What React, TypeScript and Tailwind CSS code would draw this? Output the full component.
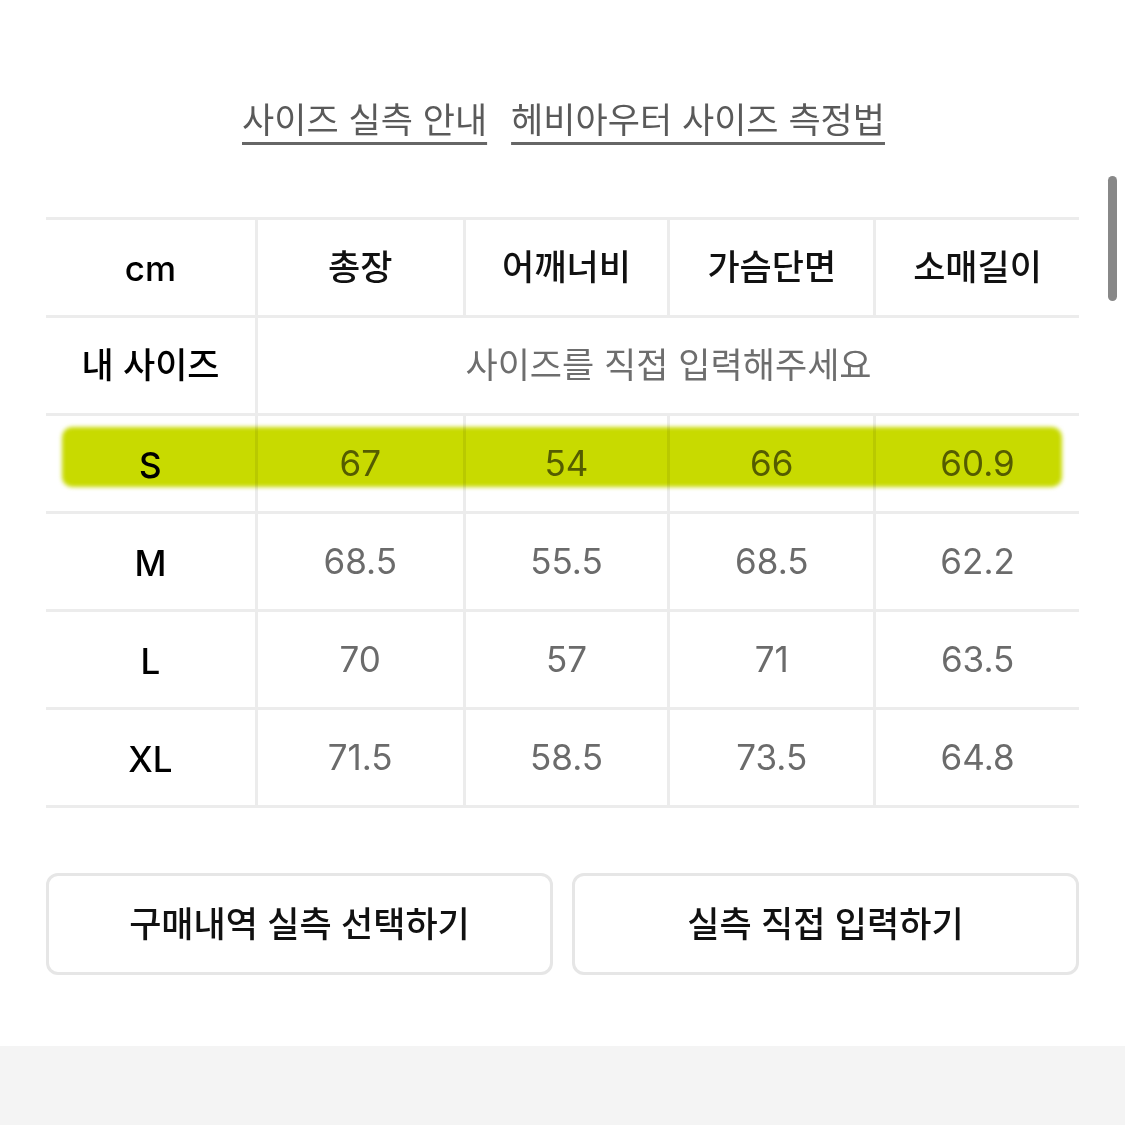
const font = { fontFamily: 'Inter, "Noto Sans CJK KR", sans-serif' };

const columns = ['총장', '어깨너비', '가슴단면', '소매길이'];

const rows = [
  { size: 'S', values: ['67', '54', '66', '60.9'] },
  { size: 'M', values: ['68.5', '55.5', '68.5', '62.2'] },
  { size: 'L', values: ['70', '57', '71', '63.5'] },
  { size: 'XL', values: ['71.5', '58.5', '73.5', '64.8'] },
];

const widths = ['w-[208px]', 'w-[205px]', 'w-[206px]', 'w-[206px]'];

const App = () => {
  return (
    <div className="relative w-[1125px] h-[1125px] bg-white overflow-hidden" style={font}>
      {/* Links */}
      <div className="flex justify-center gap-[24px] pt-[100px] pl-[2px]">
        <a className="text-[35px] leading-[40px] text-[#5a5a5a] underline decoration-[3px] underline-offset-[9px] decoration-[#666]">
          사이즈 실측 안내
        </a>
        <a className="text-[35px] leading-[40px] text-[#5a5a5a] underline decoration-[3px] underline-offset-[9px] decoration-[#666]">
          헤비아우터 사이즈 측정법
        </a>
      </div>

      {/* Table */}
      <div className="relative mx-[46px] mt-[77px] border-t-[3px] border-[#ececec]">
        <div className="flex h-[98px] border-b-[3px] border-[#ececec]">
          <div className="w-[209px] flex items-center justify-center text-[35px] font-medium text-black pt-[2px]">cm</div>
          {columns.map((c, i) => (
            <div
              key={c}
              className={`${widths[i]} flex items-center justify-center text-[35px] font-medium text-[#111] border-l-[3px] border-[#ececec]`}
            >
              {c}
            </div>
          ))}
        </div>
        <div className="flex h-[98px] border-b-[3px] border-[#ececec]">
          <div className="w-[209px] flex items-center justify-center text-[35px] font-medium text-black">내 사이즈</div>
          <div className="flex-1 flex items-center justify-center text-[35px] text-[#6e6e6e] border-l-[3px] border-[#ececec]">
            사이즈를 직접 입력해주세요
          </div>
        </div>
        {rows.map((r) => (
          <div key={r.size} className="flex h-[98px] border-b-[3px] border-[#ececec]">
            <div className="w-[209px] flex items-center justify-center text-[35px] font-medium text-black pt-[3px]">{r.size}</div>
            {r.values.map((v, i) => (
              <div
                key={i}
                className={`${widths[i]} flex items-center justify-center text-[35px] text-[#6b6b6b] border-l-[3px] border-[#ececec]`}
              >
                {v}
              </div>
            ))}
          </div>
        ))}

        {/* Highlight over S row */}
        <div className="absolute left-[16px] top-[207px] w-[1000px] h-[60px] rounded-[10px] bg-[#c8da00] mix-blend-multiply blur-[2px]" />
      </div>

      {/* Buttons */}
      <div className="flex gap-[19px] mx-[46px] mt-[65px]">
        <button className="flex-1 h-[102px] rounded-[12px] border-[3px] border-[#e6e6e6] text-[35px] font-medium text-[#111] bg-white">
          구매내역 실측 선택하기
        </button>
        <button className="flex-1 h-[102px] rounded-[12px] border-[3px] border-[#e6e6e6] text-[35px] font-medium text-[#111] bg-white">
          실측 직접 입력하기
        </button>
      </div>

      {/* Bottom band */}
      <div className="absolute left-0 right-0 top-[1046px] bottom-0 bg-[#f4f4f4]" />

      {/* Scrollbar */}
      <div className="absolute left-[1108px] top-[176px] w-[9px] h-[125px] rounded-full bg-[#888]" />
    </div>
  );
};

export default App;
